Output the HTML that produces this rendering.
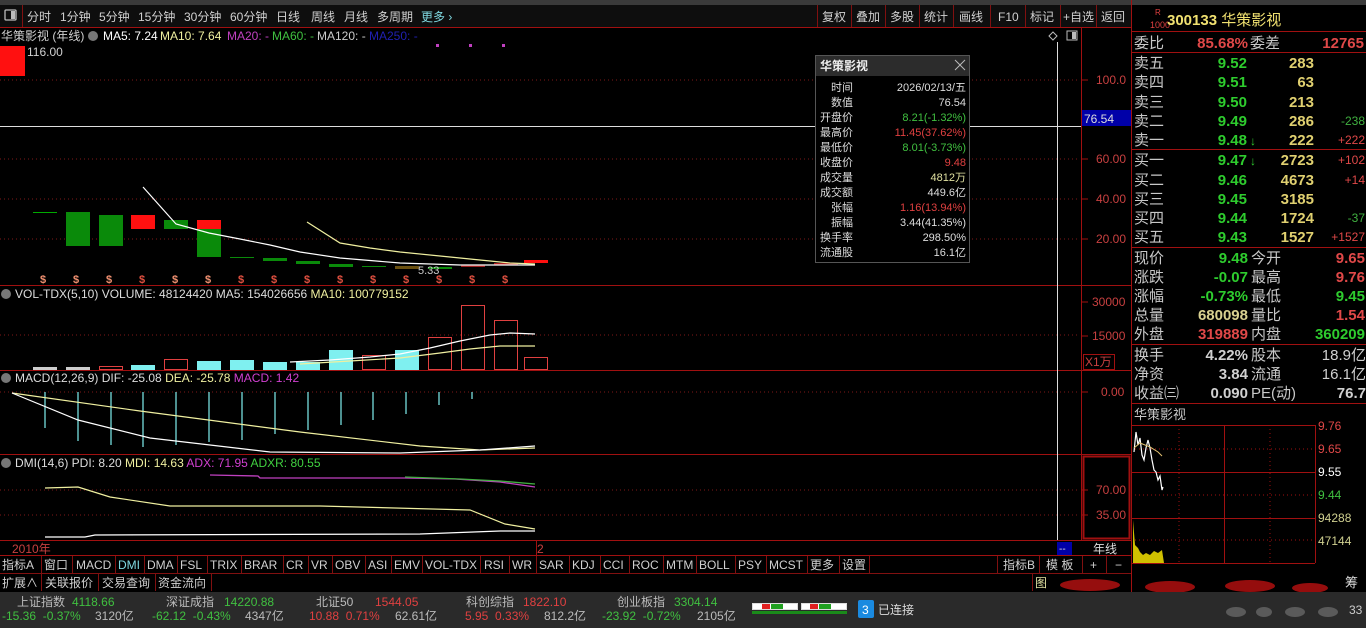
<!DOCTYPE html>
<html><head><meta charset="utf-8"><style>
html,body{margin:0;padding:0;background:#000;overflow:hidden;width:1366px;height:628px}
svg{display:block}
text{font-family:"Liberation Sans","Noto Sans CJK SC",sans-serif}
.t{font-size:12px}
.r{font-size:15px}
</style></head><body>
<svg width="1366" height="628" viewBox="0 0 1366 628" xmlns="http://www.w3.org/2000/svg" fill="#d0d0d0">
<rect width="1366" height="628" fill="#000"/>
<rect x="0" y="0" width="1366" height="5" fill="#3a3a3a"/>
<rect x="0" y="5" width="1131" height="22" fill="#0e0e0e"/>
<line x1="0" y1="27.5" x2="1131" y2="27.5" stroke="#a01010"/>
<line x1="22.5" y1="5" x2="22.5" y2="27" stroke="#801010"/>
<rect x="5" y="10" width="11" height="10" fill="none" stroke="#bbb" stroke-width="1.3" rx="1"/>
<rect x="11" y="11" width="4" height="8" fill="#bbb"/>
<g class="t" font-size="12">
<text x="27" y="21">分时</text><text x="60" y="21">1分钟</text><text x="99" y="21">5分钟</text><text x="138" y="21">15分钟</text><text x="184" y="21">30分钟</text><text x="230" y="21">60分钟</text><text x="276" y="21">日线</text><text x="311" y="21">周线</text><text x="344" y="21">月线</text><text x="377" y="21">多周期</text><text x="421" y="21" fill="#7fd8e0">更多 ›</text>
</g>
<g class="t">
<text x="822" y="21">复权</text><text x="856" y="21">叠加</text><text x="890" y="21">多股</text><text x="924" y="21">统计</text><text x="959" y="21">画线</text><text x="998" y="21">F10</text><text x="1030" y="21">标记</text><text x="1063" y="21">+自选</text><text x="1101" y="21">返回</text>
</g>
<g stroke="#801010">
<line x1="817.5" y1="5" x2="817.5" y2="27"/><line x1="851.5" y1="5" x2="851.5" y2="27"/><line x1="885.5" y1="5" x2="885.5" y2="27"/><line x1="919.5" y1="5" x2="919.5" y2="27"/><line x1="953.5" y1="5" x2="953.5" y2="27"/><line x1="990.5" y1="5" x2="990.5" y2="27"/><line x1="1025.5" y1="5" x2="1025.5" y2="27"/><line x1="1060.5" y1="5" x2="1060.5" y2="27"/><line x1="1096.5" y1="5" x2="1096.5" y2="27"/>
</g>

<text x="1" y="40" class="t">华策影视 (年线)</text>
<circle cx="93" cy="36" r="5" fill="#777"/>
<text x="103" y="40" class="t" fill="#fff">MA5: 7.24</text>
<text x="160" y="40" class="t" fill="#f0f0a0">MA10: 7.64</text>
<text x="227" y="40" class="t" fill="#c040c0">MA20: -</text>
<text x="272" y="40" class="t" fill="#40c040">MA60: -</text>
<text x="317" y="40" class="t" fill="#ccc">MA120: -</text>
<text x="369" y="40" class="t" fill="#2020b0">MA250: -</text>
<rect x="436" y="44" width="3" height="3" fill="#c040c0"/><rect x="469" y="44" width="3" height="3" fill="#c040c0"/><rect x="502" y="44" width="3" height="3" fill="#c040c0"/>
<rect x="0" y="46" width="25" height="30" fill="#ff1010"/>
<text x="27" y="56" class="t" font-size="11">116.00</text>

<g stroke="#801818" stroke-dasharray="1,3">
<line x1="0" y1="80" x2="1080" y2="80"/><line x1="0" y1="159" x2="1080" y2="159"/><line x1="0" y1="199" x2="1080" y2="199"/><line x1="0" y1="239" x2="1080" y2="239"/>
<line x1="0" y1="335" x2="1080" y2="335"/><line x1="0" y1="392" x2="1080" y2="392"/>
<line x1="0" y1="490" x2="1080" y2="490"/><line x1="0" y1="515" x2="1080" y2="515"/>
</g>
<g stroke="#a01010">
<line x1="0" y1="285.5" x2="1131" y2="285.5"/><line x1="0" y1="370.5" x2="1131" y2="370.5"/><line x1="0" y1="454.5" x2="1131" y2="454.5"/><line x1="0" y1="540.5" x2="1131" y2="540.5"/>
<line x1="1081.5" y1="28" x2="1081.5" y2="540"/>
<line x1="1131.5" y1="0" x2="1131.5" y2="628"/>
</g>
<g stroke="#a01010"><line x1="1081" y1="80" x2="1088" y2="80"/><line x1="1081" y1="159" x2="1088" y2="159"/><line x1="1081" y1="199" x2="1088" y2="199"/><line x1="1081" y1="239" x2="1088" y2="239"/><line x1="1081" y1="302" x2="1088" y2="302"/><line x1="1081" y1="336" x2="1088" y2="336"/><line x1="1081" y1="392" x2="1088" y2="392"/><line x1="1081" y1="490" x2="1088" y2="490"/><line x1="1081" y1="515" x2="1088" y2="515"/></g>
<g font-size="12" fill="#c84040">
<text x="1096" y="84">100.0</text><text x="1096" y="163">60.00</text><text x="1096" y="203">40.00</text><text x="1096" y="243">20.00</text>
<text x="1092" y="306">30000</text><text x="1092" y="340">15000</text>
<text x="1101" y="396">0.00</text><text x="1096" y="494">70.00</text><text x="1096" y="519">35.00</text>
</g>
<rect x="1083.5" y="354.5" width="31" height="15" fill="none" stroke="#a01010"/>
<text x="1085" y="366" font-size="12" fill="#c84040">X1万</text>
<rect x="1083.5" y="456.5" width="46" height="82" fill="none" stroke="#a01010" stroke-width="2"/>
<rect x="1082" y="110" width="49" height="16" fill="#0000a8"/>
<text x="1084" y="123" font-size="12" fill="#ddd">76.54</text>
<path d="M1053 32 l4 4 -4 4 -4 -4z" fill="none" stroke="#bbb"/>
<rect x="1067" y="31" width="10" height="9" fill="none" stroke="#bbb"/><rect x="1072" y="32" width="4" height="7" fill="#bbb"/>
<line x1="1057.5" y1="42" x2="1057.5" y2="540" stroke="#ddd"/>
<line x1="0" y1="126.5" x2="1081" y2="126.5" stroke="#ddd"/>

<g>
<rect x="33" y="212" width="24" height="1" fill="#0a0"/>
<rect x="66" y="212" width="24" height="34" fill="#0a8a0a"/>
<rect x="99" y="215" width="24" height="31" fill="#0a8a0a"/>
<rect x="131" y="215" width="24" height="14" fill="#ff1010"/>
<rect x="164" y="220" width="24" height="9" fill="#0a8a0a"/>
<rect x="197" y="220" width="24" height="9" fill="#ff1010"/>
<rect x="197" y="229" width="24" height="28" fill="#0a8a0a"/>
<rect x="230" y="257" width="24" height="1" fill="#0a8a0a"/>
<rect x="263" y="258" width="24" height="3" fill="#0a8a0a"/>
<rect x="296" y="261" width="24" height="3" fill="#0a8a0a"/>
<rect x="329" y="264" width="24" height="3" fill="#0a8a0a"/>
<rect x="362" y="266" width="24" height="1" fill="#0a8a0a"/>
<rect x="395" y="266" width="24" height="3" fill="#6a5010"/>
<rect x="428" y="267" width="24" height="2" fill="#0a8a0a"/>
<rect x="461" y="265" width="24" height="2" fill="#a02020"/>
<rect x="494" y="263" width="24" height="2" fill="#b02020"/>
<rect x="524" y="260" width="24" height="3" fill="#ff1010"/>
</g>
<polyline points="143,187 176,224 209,233 240,239 270,245 300,252 340,258 400,263 460,265 500,265 535,265" fill="none" stroke="#fff" stroke-width="1.2"/>
<polyline points="307,222 340,243 370,248 400,252 440,256 480,260 510,263 535,264" fill="none" stroke="#f0f0a0" stroke-width="1.2"/>
<text x="418" y="274" font-size="11" fill="#ccc">5.33</text>
<g font-size="11" font-weight="bold" fill="#e05040">
<text x="40" y="283" fill="#f09070">$</text><text x="73" y="283" fill="#f09070">$</text><text x="106" y="283" fill="#f09070">$</text><text x="139" y="283">$</text><text x="172" y="283" fill="#f09070">$</text><text x="205" y="283" fill="#f09070">$</text><text x="238" y="283">$</text><text x="271" y="283">$</text><text x="304" y="283">$</text><text x="337" y="283">$</text><text x="370" y="283">$</text><text x="403" y="283">$</text><text x="436" y="283">$</text><text x="469" y="283">$</text><text x="502" y="283">$</text>
</g>

<circle cx="6" cy="294" r="5" fill="#777"/>
<text x="15" y="298" class="t" fill="#ddd">VOL-TDX(5,10) VOLUME: 48124420 MA5: 154026656 <tspan fill="#f0f0a0">MA10: 100779152</tspan></text>
<g>
<rect x="33" y="367" width="24" height="3" fill="#ccc"/>
<rect x="66" y="367" width="24" height="3" fill="#ccc"/>
<rect x="99.5" y="366.5" width="23" height="3" fill="none" stroke="#e04040"/>
<rect x="131" y="365" width="24" height="5" fill="#7ff0f0"/>
<rect x="164.5" y="359.5" width="23" height="10" fill="none" stroke="#e04040"/>
<rect x="197" y="361" width="24" height="9" fill="#7ff0f0"/>
<rect x="230" y="360" width="24" height="10" fill="#7ff0f0"/>
<rect x="263" y="362" width="24" height="8" fill="#7ff0f0"/>
<rect x="296" y="362" width="24" height="8" fill="#7ff0f0"/>
<rect x="329" y="350" width="24" height="20" fill="#7ff0f0"/>
<rect x="362.5" y="355.5" width="23" height="14" fill="none" stroke="#e04040"/>
<rect x="395" y="350" width="24" height="20" fill="#7ff0f0"/>
<rect x="428.5" y="337.5" width="23" height="32" fill="none" stroke="#e04040"/>
<rect x="461.5" y="305.5" width="23" height="64" fill="none" stroke="#e04040"/>
<rect x="494.5" y="320.5" width="23" height="49" fill="none" stroke="#e04040"/>
<rect x="524.5" y="357.5" width="23" height="12" fill="none" stroke="#e04040"/>
</g>
<polyline points="290,362 330,360 370,357 400,354 430,348 460,341 490,335 510,333 535,334" fill="none" stroke="#fff" stroke-width="1.2"/>
<polyline points="300,364 350,361 400,358 440,353 470,349 500,346 535,346" fill="none" stroke="#f0f0a0" stroke-width="1.2"/>

<circle cx="6" cy="378" r="5" fill="#777"/>
<text x="15" y="382" class="t" fill="#ddd">MACD(12,26,9) DIF: -25.08 <tspan fill="#f0f0a0">DEA: -25.78</tspan> <tspan fill="#d040d0">MACD: 1.42</tspan></text>
<g stroke="#80f0f0" stroke-width="1.2">
<line x1="45" y1="392" x2="45" y2="428"/><line x1="78" y1="392" x2="78" y2="441"/><line x1="111" y1="392" x2="111" y2="445"/><line x1="143" y1="392" x2="143" y2="447"/><line x1="176" y1="392" x2="176" y2="445"/><line x1="209" y1="392" x2="209" y2="442"/><line x1="242" y1="392" x2="242" y2="440"/><line x1="275" y1="392" x2="275" y2="434"/><line x1="308" y1="392" x2="308" y2="430"/><line x1="341" y1="392" x2="341" y2="425"/><line x1="373" y1="392" x2="373" y2="420"/><line x1="406" y1="392" x2="406" y2="414"/><line x1="439" y1="392" x2="439" y2="405"/><line x1="472" y1="392" x2="472" y2="399"/>
</g>
<polyline points="12,393 140,411 300,432 420,446 480,450 535,448" fill="none" stroke="#f0f0a0" stroke-width="1.2"/>
<polyline points="12,393 78,420 150,438 270,452 400,453 480,450 535,446" fill="none" stroke="#fff" stroke-width="1.2"/>

<circle cx="6" cy="463" r="5" fill="#777"/>
<text x="15" y="467" class="t" fill="#ddd">DMI(14,6) PDI: 8.20 <tspan fill="#f0f0a0">MDI: 14.63</tspan> <tspan fill="#d040d0">ADX: 71.95</tspan> <tspan fill="#40d040">ADXR: 80.55</tspan></text>
<polyline points="210,475 258,476 260,478 405,478 455,479 500,482 535,487" fill="none" stroke="#c040c0" stroke-width="1.3"/>
<polyline points="405,477 460,479 500,481 535,484" fill="none" stroke="#40b040" stroke-width="1.3"/>
<polyline points="45,488 78,487 110,497 170,506 320,506 470,510 505,524 535,529" fill="none" stroke="#f0f0a0" stroke-width="1.2"/>
<polyline points="45,537 85,537 95,535 420,534 500,531 535,531" fill="none" stroke="#fff" stroke-width="1.2"/>

<rect x="815.5" y="55.5" width="154" height="207" fill="#000" stroke="#555"/>
<rect x="816" y="56" width="153" height="20" fill="#2c2c2c"/>
<text x="820" y="70" font-size="12" font-weight="bold" fill="#eee">华策影视</text>
<path d="M955 60 l10 10 M965 60 l-10 10" stroke="#bbb" fill="none"/>
<g font-size="11" fill="#ddd">
<text x="831" y="91">时间</text><text x="966" y="91" text-anchor="end">2026/02/13/五</text>
<text x="831" y="106">数值</text><text x="966" y="106" text-anchor="end">76.54</text>
<text x="820" y="121">开盘价</text><text x="966" y="121" text-anchor="end" fill="#40c040">8.21(-1.32%)</text>
<text x="820" y="136">最高价</text><text x="966" y="136" text-anchor="end" fill="#e04040">11.45(37.62%)</text>
<text x="820" y="151">最低价</text><text x="966" y="151" text-anchor="end" fill="#40c040">8.01(-3.73%)</text>
<text x="820" y="166">收盘价</text><text x="966" y="166" text-anchor="end" fill="#e04040">9.48</text>
<text x="820" y="181">成交量</text><text x="966" y="181" text-anchor="end" fill="#e0e0a0">4812万</text>
<text x="820" y="196">成交额</text><text x="966" y="196" text-anchor="end">449.6亿</text>
<text x="831" y="211">张幅</text><text x="966" y="211" text-anchor="end" fill="#e04040">1.16(13.94%)</text>
<text x="831" y="226">振幅</text><text x="966" y="226" text-anchor="end">3.44(41.35%)</text>
<text x="820" y="241">换手率</text><text x="966" y="241" text-anchor="end">298.50%</text>
<text x="820" y="256">流通股</text><text x="966" y="256" text-anchor="end">16.1亿</text>
</g>

<text x="12" y="553" font-size="12" fill="#c84040">2010年</text>
<line x1="536.5" y1="541" x2="536.5" y2="555" stroke="#a01010"/>
<text x="537" y="553" font-size="12" fill="#c84040">2</text>
<rect x="1057" y="542" width="15" height="13" fill="#0000a8"/>
<text x="1059" y="552" font-size="10" fill="#ddd">--</text>
<text x="1093" y="553" font-size="12" fill="#ddd">年线</text>
<line x1="0" y1="555.5" x2="1131" y2="555.5" stroke="#a01010"/>
<g font-size="12" fill="#d0d0d0">
<text x="2" y="569">指标A</text><text x="44" y="569">窗口</text><text x="76" y="569">MACD</text><text x="118" y="569" fill="#7fd8e0">DMI</text><text x="147" y="569">DMA</text><text x="180" y="569">FSL</text><text x="210" y="569">TRIX</text><text x="244" y="569">BRAR</text><text x="286" y="569">CR</text><text x="311" y="569">VR</text><text x="335" y="569">OBV</text><text x="368" y="569">ASI</text><text x="394" y="569">EMV</text><text x="425" y="569">VOL-TDX</text><text x="484" y="569">RSI</text><text x="512" y="569">WR</text><text x="539" y="569">SAR</text><text x="572" y="569">KDJ</text><text x="603" y="569">CCI</text><text x="632" y="569">ROC</text><text x="666" y="569">MTM</text><text x="699" y="569">BOLL</text><text x="738" y="569">PSY</text><text x="769" y="569">MCST</text><text x="810" y="569">更多</text><text x="842" y="569">设置</text>
<text x="1003" y="569">指标B</text><text x="1046" y="569">模 板</text><text x="1090" y="569">+</text><text x="1115" y="569">−</text>
</g>
<g stroke="#801010">
<line x1="41.5" y1="556" x2="41.5" y2="573"/><line x1="72.5" y1="556" x2="72.5" y2="573"/><line x1="115.5" y1="556" x2="115.5" y2="573"/><line x1="144.5" y1="556" x2="144.5" y2="573"/><line x1="177.5" y1="556" x2="177.5" y2="573"/><line x1="207.5" y1="556" x2="207.5" y2="573"/><line x1="241.5" y1="556" x2="241.5" y2="573"/><line x1="283.5" y1="556" x2="283.5" y2="573"/><line x1="308.5" y1="556" x2="308.5" y2="573"/><line x1="332.5" y1="556" x2="332.5" y2="573"/><line x1="365.5" y1="556" x2="365.5" y2="573"/><line x1="391.5" y1="556" x2="391.5" y2="573"/><line x1="422.5" y1="556" x2="422.5" y2="573"/><line x1="480.5" y1="556" x2="480.5" y2="573"/><line x1="509.5" y1="556" x2="509.5" y2="573"/><line x1="536.5" y1="556" x2="536.5" y2="573"/><line x1="569.5" y1="556" x2="569.5" y2="573"/><line x1="600.5" y1="556" x2="600.5" y2="573"/><line x1="629.5" y1="556" x2="629.5" y2="573"/><line x1="663.5" y1="556" x2="663.5" y2="573"/><line x1="696.5" y1="556" x2="696.5" y2="573"/><line x1="735.5" y1="556" x2="735.5" y2="573"/><line x1="766.5" y1="556" x2="766.5" y2="573"/><line x1="807.5" y1="556" x2="807.5" y2="573"/><line x1="839.5" y1="556" x2="839.5" y2="573"/><line x1="869.5" y1="556" x2="869.5" y2="573"/>
<line x1="997.5" y1="556" x2="997.5" y2="573"/><line x1="1039.5" y1="556" x2="1039.5" y2="573"/><line x1="1082.5" y1="556" x2="1082.5" y2="573"/><line x1="1106.5" y1="556" x2="1106.5" y2="573"/>
<line x1="0" y1="573.5" x2="1131" y2="573.5"/>
<line x1="41.5" y1="574" x2="41.5" y2="591"/><line x1="98.5" y1="574" x2="98.5" y2="591"/><line x1="155.5" y1="574" x2="155.5" y2="591"/><line x1="211.5" y1="574" x2="211.5" y2="591"/><line x1="1032.5" y1="574" x2="1032.5" y2="591"/>
</g>
<g font-size="12" fill="#d0d0d0">
<text x="2" y="587">扩展∧</text><text x="45" y="587">关联报价</text><text x="102" y="587">交易查询</text><text x="158" y="587">资金流向</text>
</g>
<text x="1035" y="587" font-size="12" fill="#e0e0a0">图</text>
<g fill="#b01010" opacity="0.85">
<ellipse cx="1090" cy="585" rx="30" ry="6"/><ellipse cx="1170" cy="587" rx="25" ry="6"/><ellipse cx="1250" cy="586" rx="25" ry="6"/><ellipse cx="1310" cy="588" rx="18" ry="5"/>
</g>
<text x="1345" y="587" font-size="13" fill="#ddd">筹</text>

<rect x="0" y="592" width="1366" height="36" fill="#2a2a2a"/>
<g font-size="12">
<text x="17" y="606" fill="#bbb">上证指数</text><text x="72" y="606" fill="#40c040">4118.66</text>
<text x="2" y="620" fill="#40c040">-15.36 &#160;-0.37%</text><text x="95" y="620" fill="#bbb">3120亿</text>
<text x="166" y="606" fill="#bbb">深证成指</text><text x="224" y="606" fill="#40c040">14220.88</text>
<text x="152" y="620" fill="#40c040">-62.12 &#160;-0.43%</text><text x="245" y="620" fill="#bbb">4347亿</text>
<text x="316" y="606" fill="#bbb">北证50</text><text x="375" y="606" fill="#e04040">1544.05</text>
<text x="309" y="620" fill="#e04040">10.88 &#160;0.71%</text><text x="395" y="620" fill="#bbb">62.61亿</text>
<text x="466" y="606" fill="#bbb">科创综指</text><text x="523" y="606" fill="#e04040">1822.10</text>
<text x="465" y="620" fill="#e04040">5.95 &#160;0.33%</text><text x="544" y="620" fill="#bbb">812.2亿</text>
<text x="617" y="606" fill="#bbb">创业板指</text><text x="674" y="606" fill="#40c040">3304.14</text>
<text x="602" y="620" fill="#40c040">-23.92 &#160;-0.72%</text><text x="697" y="620" fill="#bbb">2105亿</text>
</g>
<rect x="752.5" y="603.5" width="45" height="6" fill="#fff" stroke="#ddd"/><rect x="762" y="604" width="8" height="5" fill="#e02020"/><rect x="771" y="604" width="12" height="5" fill="#20a020"/>
<rect x="801.5" y="603.5" width="45" height="6" fill="#fff" stroke="#ddd"/><rect x="810" y="604" width="8" height="5" fill="#e02020"/><rect x="819" y="604" width="12" height="5" fill="#20a020"/>
<rect x="752" y="611" width="95" height="3" fill="#1a8a1a"/>
<rect x="858" y="600" width="16" height="18" fill="#1a8ae0" rx="2"/>
<text x="862" y="614" font-size="12" fill="#fff">3</text>
<text x="878" y="614" font-size="12" fill="#ddd">已连接</text>
<g fill="#666" opacity="0.8"><ellipse cx="1236" cy="612" rx="10" ry="5"/><ellipse cx="1264" cy="612" rx="8" ry="5"/><ellipse cx="1295" cy="612" rx="10" ry="5"/><ellipse cx="1328" cy="612" rx="10" ry="5"/></g>
<text x="1349" y="614" font-size="12" fill="#ccc">33</text>

<g stroke="#a01010">
<line x1="1131" y1="31.5" x2="1366" y2="31.5"/><line x1="1131" y1="52.5" x2="1366" y2="52.5"/><line x1="1131" y1="149.5" x2="1366" y2="149.5"/><line x1="1131" y1="247.5" x2="1366" y2="247.5"/><line x1="1131" y1="344.5" x2="1366" y2="344.5"/><line x1="1131" y1="403.5" x2="1366" y2="403.5"/>
</g>
<text x="1155" y="15" font-size="8" fill="#e04040">R</text><text x="1150" y="28" font-size="9" fill="#e04040">1000</text>
<text x="1167" y="25" font-size="15" font-weight="bold" fill="#f0e070">300133 <tspan font-weight="normal">华策影视</tspan></text>
<g class="r">
<text x="1134" y="48" fill="#c8c8c8">委比</text><text x="1248" y="48" text-anchor="end" fill="#e04848" font-weight="bold">85.68%</text><text x="1250" y="48" fill="#c8c8c8">委差</text><text x="1364" y="48" text-anchor="end" fill="#e04848" font-weight="bold">12765</text>
</g>
<g class="r" font-weight="bold">
<g fill="#c8c8c8" font-weight="normal"><text x="1134" y="68">卖五</text><text x="1134" y="87">卖四</text><text x="1134" y="107">卖三</text><text x="1134" y="126">卖二</text><text x="1134" y="145">卖一</text><text x="1134" y="165">买一</text><text x="1134" y="185">买二</text><text x="1134" y="204">买三</text><text x="1134" y="223">买四</text><text x="1134" y="242">买五</text></g>
<g fill="#2ecc2e" text-anchor="end"><text x="1247" y="68">9.52</text><text x="1247" y="87">9.51</text><text x="1247" y="107">9.50</text><text x="1247" y="126">9.49</text><text x="1247" y="145">9.48</text><text x="1247" y="165">9.47</text><text x="1247" y="185">9.46</text><text x="1247" y="204">9.45</text><text x="1247" y="223">9.44</text><text x="1247" y="242">9.43</text></g>
<g fill="#e0d070" text-anchor="end"><text x="1314" y="68">283</text><text x="1314" y="87">63</text><text x="1314" y="107">213</text><text x="1314" y="126">286</text><text x="1314" y="145">222</text><text x="1314" y="165">2723</text><text x="1314" y="185">4673</text><text x="1314" y="204">3185</text><text x="1314" y="223">1724</text><text x="1314" y="242">1527</text></g>
</g>
<text x="1250" y="145" font-size="12" fill="#2ecc2e">↓</text><text x="1250" y="165" font-size="12" fill="#2ecc2e">↓</text>
<g font-size="12" text-anchor="end">
<text x="1365" y="125" fill="#40b040">-238</text><text x="1365" y="144" fill="#e04848">+222</text><text x="1365" y="164" fill="#e04848">+102</text><text x="1365" y="184" fill="#e04848">+14</text><text x="1365" y="222" fill="#40b040">-37</text><text x="1365" y="241" fill="#e04848">+1527</text>
</g>
<g class="r">
<g fill="#c8c8c8"><text x="1134" y="263">现价</text><text x="1134" y="282">涨跌</text><text x="1134" y="301">涨幅</text><text x="1134" y="320">总量</text><text x="1134" y="339">外盘</text><text x="1134" y="360">换手</text><text x="1134" y="379">净资</text><text x="1134" y="398">收益㈢</text>
<text x="1251" y="263">今开</text><text x="1251" y="282">最高</text><text x="1251" y="301">最低</text><text x="1251" y="320">量比</text><text x="1251" y="339">内盘</text><text x="1251" y="360">股本</text><text x="1251" y="379">流通</text><text x="1251" y="398">PE(动)</text></g>
<g text-anchor="end" font-weight="bold">
<text x="1248" y="263" fill="#2ecc2e">9.48</text><text x="1248" y="282" fill="#2ecc2e">-0.07</text><text x="1248" y="301" fill="#2ecc2e">-0.73%</text><text x="1248" y="320" fill="#d8d090">680098</text><text x="1248" y="339" fill="#e04848">319889</text><text x="1248" y="360" fill="#d0d0d0">4.22%</text><text x="1248" y="379" fill="#d0d0d0">3.84</text><text x="1248" y="398" fill="#d0d0d0">0.090</text>
<text x="1365" y="263" fill="#e04848">9.65</text><text x="1365" y="282" fill="#e04848">9.76</text><text x="1365" y="301" fill="#2ecc2e">9.45</text><text x="1365" y="320" fill="#e04848">1.54</text><text x="1365" y="339" fill="#2ecc2e">360209</text><text x="1366" y="360" fill="#d0d0d0" font-weight="normal">18.9亿</text><text x="1366" y="379" fill="#d0d0d0" font-weight="normal">16.1亿</text><text x="1366" y="398" fill="#d0d0d0">76.7</text>
</g>
</g>
<text x="1134" y="419" font-size="13" fill="#c8c8c8">华策影视</text>
<g stroke="#a01010">
<line x1="1131" y1="425.5" x2="1315" y2="425.5"/><line x1="1131" y1="472.5" x2="1315" y2="472.5"/><line x1="1131" y1="518.5" x2="1315" y2="518.5"/><line x1="1131" y1="563.5" x2="1315" y2="563.5"/>
<line x1="1224.5" y1="425" x2="1224.5" y2="563"/><line x1="1315.5" y1="425" x2="1315.5" y2="563"/>
</g>
<g stroke="#a01010" stroke-dasharray="1,3">
<line x1="1131" y1="449" x2="1315" y2="449"/><line x1="1131" y1="495" x2="1315" y2="495"/><line x1="1131" y1="540" x2="1315" y2="540"/>
<line x1="1179" y1="425" x2="1179" y2="563"/><line x1="1270" y1="425" x2="1270" y2="563"/>
</g>
<g font-size="12">
<text x="1318" y="430" fill="#e04848">9.76</text><text x="1318" y="453" fill="#e04848">9.65</text><text x="1318" y="476" fill="#fff">9.55</text><text x="1318" y="499" fill="#40c040">9.44</text><text x="1318" y="522" fill="#d0d090">94288</text><text x="1318" y="545" fill="#d0d090">47144</text>
</g>
<polyline points="1134,452 1136,432 1138,445 1140,438 1142,455 1144,460 1146,448 1148,440 1150,448 1152,460 1154,470 1156,472 1158,480 1160,476 1162,490 1163,487" fill="none" stroke="#fff" stroke-width="1.2"/>
<polyline points="1134,448 1140,443 1150,447 1158,452 1162,456" fill="none" stroke="#e0c070"/>
<path d="M1133 563 L1133 520 L1135 545 L1138 548 L1140 552 L1143 555 L1146 553 L1150 555 L1154 551 L1158 553 L1162 550 L1164 563Z" fill="#d0c000"/>
</svg>
</body></html>
